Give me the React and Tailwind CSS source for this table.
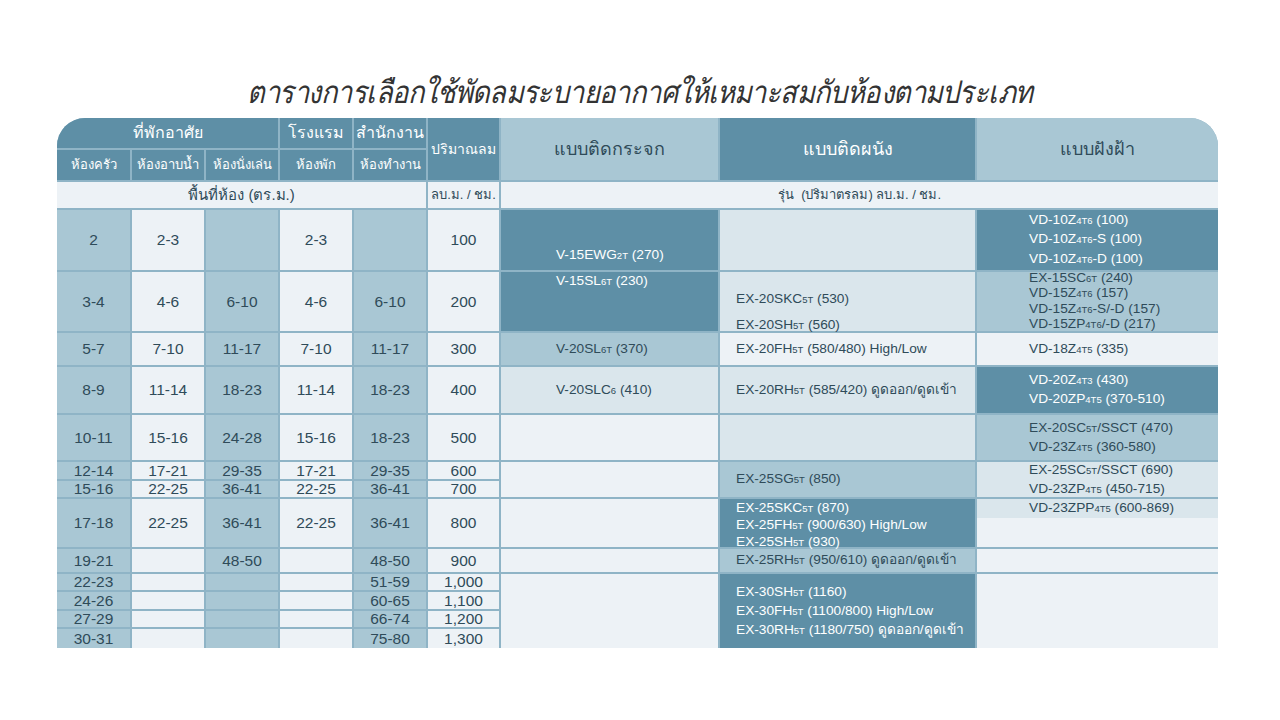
import React from 'react';

/* ─── Colour tokens ─────────────────────────────────────────────── */
const DARK = 'bg-[#5e8fa6] text-white';
const MID = 'bg-[#a9c7d4] text-[#2f4b59]';
const LIGHT = 'bg-[#dae6ec] text-[#2f4b59]';
const PALE = 'bg-[#edf2f6] text-[#2f4b59]';

const ROWS = [
  'row-start-4', 'row-start-5', 'row-start-6', 'row-start-7', 'row-start-8', 'row-start-9', 'row-start-10',
  'row-start-11', 'row-start-12', 'row-start-13', 'row-start-14', 'row-start-15', 'row-start-16',
];
const COLS = ['col-start-1', 'col-start-2', 'col-start-3', 'col-start-4', 'col-start-5', 'col-start-6'];

// room sizes per air volume
const sizes = [
  ['2', '2-3', '', '2-3', '', '100'],
  ['3-4', '4-6', '6-10', '4-6', '6-10', '200'],
  ['5-7', '7-10', '11-17', '7-10', '11-17', '300'],
  ['8-9', '11-14', '18-23', '11-14', '18-23', '400'],
  ['10-11', '15-16', '24-28', '15-16', '18-23', '500'],
  ['12-14', '17-21', '29-35', '17-21', '29-35', '600'],
  ['15-16', '22-25', '36-41', '22-25', '36-41', '700'],
  ['17-18', '22-25', '36-41', '22-25', '36-41', '800'],
  ['19-21', '', '48-50', '', '48-50', '900'],
  ['22-23', '', '', '', '51-59', '1,000'],
  ['24-26', '', '', '', '60-65', '1,100'],
  ['27-29', '', '', '', '66-74', '1,200'],
  ['30-31', '', '', '', '75-80', '1,300'],
];

// models: {..} marks the small suffix
const models = [
  // แบบติดกระจก
  { pos: 'col-start-7 row-start-4', tone: DARK, align: 'justify-end pb-[6px] pl-[55px]', lh: 'leading-[16px]', lines: ['V-15EWG{2T} (270)'] },
  { pos: 'col-start-7 row-start-5', tone: DARK, align: 'justify-start pt-[1px] pl-[55px]', lh: 'leading-[16px]', lines: ['V-15SL{6T} (230)'] },
  { pos: 'col-start-7 row-start-6', tone: MID, align: 'justify-center pl-[55px]', lh: 'leading-[16px]', lines: ['V-20SL{6T} (370)'] },
  { pos: 'col-start-7 row-start-7', tone: LIGHT, align: 'justify-center pl-[55px]', lh: 'leading-[16px]', lines: ['V-20SLC{6} (410)'] },
  { pos: 'col-start-7 row-start-8', tone: PALE, lines: [] },
  { pos: 'col-start-7 row-start-9 row-span-2', tone: PALE, lines: [] },
  { pos: 'col-start-7 row-start-11', tone: PALE, lines: [] },
  { pos: 'col-start-7 row-start-12', tone: PALE, lines: [] },
  { pos: 'col-start-7 row-start-13 row-span-4', tone: PALE, lines: [] },
  // แบบติดผนัง
  { pos: 'col-start-8 row-start-4', tone: LIGHT, lines: [] },
  { pos: 'col-start-8 row-start-5', tone: LIGHT, align: 'justify-start pt-[14px] pl-[16px]', lh: 'leading-[25px]', lines: ['EX-20SKC{5T} (530)', 'EX-20SH{5T} (560)'] },
  { pos: 'col-start-8 row-start-6', tone: PALE, align: 'justify-center pl-[16px]', lh: 'leading-[16px]', lines: ['EX-20FH{5T} (580/480) High/Low'] },
  { pos: 'col-start-8 row-start-7', tone: LIGHT, align: 'justify-center pl-[16px]', lh: 'leading-[16px]', lines: ['EX-20RH{5T} (585/420) ดูดออก/ดูดเข้า'] },
  { pos: 'col-start-8 row-start-8', tone: LIGHT, lines: [] },
  { pos: 'col-start-8 row-start-9 row-span-2', tone: MID, align: 'justify-center pl-[16px]', lh: 'leading-[16px]', lines: ['EX-25SG{5T} (850)'] },
  { pos: 'col-start-8 row-start-11', tone: DARK, align: 'justify-start pt-[1px] pl-[16px]', lh: 'leading-[16px]', lines: ['EX-25SKC{5T} (870)', 'EX-25FH{5T} (900/630) High/Low', 'EX-25SH{5T} (930)'] },
  { pos: 'col-start-8 row-start-12', tone: MID, align: 'justify-center pl-[16px]', lh: 'leading-[16px]', lines: ['EX-25RH{5T} (950/610) ดูดออก/ดูดเข้า'] },
  { pos: 'col-start-8 row-start-13 row-span-4', tone: DARK, align: 'justify-center pl-[16px]', lh: 'leading-[18px]', lines: ['EX-30SH{5T} (1160)', 'EX-30FH{5T} (1100/800) High/Low', 'EX-30RH{5T} (1180/750) ดูดออก/ดูดเข้า'] },
  // แบบฝังฝ้า
  { pos: 'col-start-9 row-start-4', tone: DARK, align: 'justify-center pl-[52px]', lh: 'leading-[18.5px]', lines: ['VD-10Z{4T6} (100)', 'VD-10Z{4T6}-S (100)', 'VD-10Z{4T6}-D (100)'] },
  { pos: 'col-start-9 row-start-5', tone: MID, align: 'justify-center pl-[52px]', lh: 'leading-[14.5px]', lines: ['EX-15SC{6T} (240)', 'VD-15Z{4T6} (157)', 'VD-15Z{4T6}-S/-D (157)', 'VD-15ZP{4T6}/-D (217)'] },
  { pos: 'col-start-9 row-start-6', tone: PALE, align: 'justify-center pl-[52px]', lh: 'leading-[16px]', lines: ['VD-18Z{4T5} (335)'] },
  { pos: 'col-start-9 row-start-7', tone: DARK, align: 'justify-center pl-[52px]', lh: 'leading-[18px]', lines: ['VD-20Z{4T3} (430)', 'VD-20ZP{4T5} (370-510)'] },
  { pos: 'col-start-9 row-start-8', tone: MID, align: 'justify-center pl-[52px]', lh: 'leading-[17.5px]', lines: ['EX-20SC{5T}/SSCT (470)', 'VD-23Z{4T5} (360-580)'] },
  { pos: 'col-start-9 row-start-9 row-span-2', tone: LIGHT, align: 'justify-center pl-[52px]', lh: 'leading-[18px]', lines: ['EX-25SC{5T}/SSCT (690)', 'VD-23ZP{4T5} (450-715)'] },
  { pos: 'col-start-9 row-start-12', tone: PALE, lines: [] },
  { pos: 'col-start-9 row-start-13 row-span-4', tone: PALE, lines: [] },
];

function Model({ text }) {
  const parts = text.split(/(\{[^}]+\})/);
  return (
    <span className="whitespace-nowrap">
      {parts.map((p, i) =>
        p.startsWith('{')
          ? <span key={i} className="text-[9.5px]">{p.slice(1, -1)}</span>
          : <span key={i}>{p}</span>
      )}
    </span>
  );
}

function Head({ pos, tone, children, size = 'text-[15px]' }) {
  return (
    <div className={`${pos} ${tone} ${size} flex items-center justify-center whitespace-nowrap`}>
      {children}
    </div>
  );
}

export default function App() {
  return (
    <div className="w-[1280px] h-[720px] bg-white font-['Liberation_Sans','Noto_Sans',sans-serif] overflow-hidden">
      {/* Title */}
      <div className="h-[118px] flex items-end justify-center pb-[10px]">
        <h1 className="text-[31px] italic leading-none text-[#333333] tracking-[-0.5px] scale-x-[0.88] whitespace-nowrap">
          ตารางการเลือกใช้พัดลมระบายอากาศให้เหมาะสมกับห้องตามประเภท
        </h1>
      </div>

      {/* Table */}
      <div className="ml-[57px] w-[1161px] grid gap-[2px] bg-[#8fb4c6] rounded-tl-[28px] rounded-tr-[28px] overflow-hidden
        grid-cols-[73px_72px_72px_72px_72px_71px_217px_255px_241px]
        grid-rows-[30px_30px_26px_60px_59px_32px_46px_45px_17px_16px_48px_23px_16px_17px_16px_19px]">

        {/* header rows */}
        <Head pos="col-start-1 col-span-3 row-start-1" tone={DARK} size="text-[16px]">ที่พักอาศัย</Head>
        <Head pos="col-start-4 row-start-1" tone={DARK} size="text-[16px]">โรงแรม</Head>
        <Head pos="col-start-5 row-start-1" tone={DARK} size="text-[16px]">สำนักงาน</Head>
        <Head pos="col-start-6 row-start-1 row-span-2" tone={DARK} size="text-[14px]">ปริมาณลม</Head>
        <Head pos="col-start-7 row-start-1 row-span-2" tone={MID} size="text-[18px]">แบบติดกระจก</Head>
        <Head pos="col-start-8 row-start-1 row-span-2" tone={DARK} size="text-[18px]">แบบติดผนัง</Head>
        <Head pos="col-start-9 row-start-1 row-span-2" tone={MID} size="text-[18px]">แบบฝังฝ้า</Head>

        <Head pos="col-start-1 row-start-2" tone={DARK} size="text-[13px]">ห้องครัว</Head>
        <Head pos="col-start-2 row-start-2" tone={DARK} size="text-[13px]">ห้องอาบน้ำ</Head>
        <Head pos="col-start-3 row-start-2" tone={DARK} size="text-[13px]">ห้องนั่งเล่น</Head>
        <Head pos="col-start-4 row-start-2" tone={DARK} size="text-[13px]">ห้องพัก</Head>
        <Head pos="col-start-5 row-start-2" tone={DARK} size="text-[13px]">ห้องทำงาน</Head>

        <Head pos="col-start-1 col-span-5 row-start-3" tone={PALE} size="text-[15px]">พื้นที่ห้อง (ตร.ม.)</Head>
        <Head pos="col-start-6 row-start-3" tone={PALE} size="text-[13px]">ลบ.ม. / ชม.</Head>
        <Head pos="col-start-7 col-span-3 row-start-3" tone={PALE} size="text-[13px]">รุ่น&nbsp;&nbsp;(ปริมาตรลม) ลบ.ม. / ชม.</Head>

        {/* room sizes */}
        {sizes.map((row, r) =>
          row.map((v, c) => (
            <div key={`${r}-${c}`}
              className={`${ROWS[r]} ${COLS[c]} ${c % 2 === 0 ? MID : PALE} flex items-center justify-center text-[15.5px] leading-none`}>
              {v}
            </div>
          ))
        )}

        {/* models */}
        {models.map((m, i) => (
          <div key={i} className={`${m.pos} ${m.tone} flex flex-col ${m.align || ''} ${m.lh || ''} text-[13.7px]`}>
            {m.lines.map((l, j) => <Model key={j} text={l} />)}
          </div>
        ))}

        {/* last ceiling cell: top band shaded */}
        <div className="col-start-9 row-start-11 flex flex-col bg-[#edf2f6] text-[#2f4b59] text-[13.7px]">
          <div className="h-[19px] bg-[#dae6ec] pl-[52px] leading-[17px]">
            <Model text="VD-23ZPP{4T5} (600-869)" />
          </div>
        </div>
      </div>
    </div>
  );
}
